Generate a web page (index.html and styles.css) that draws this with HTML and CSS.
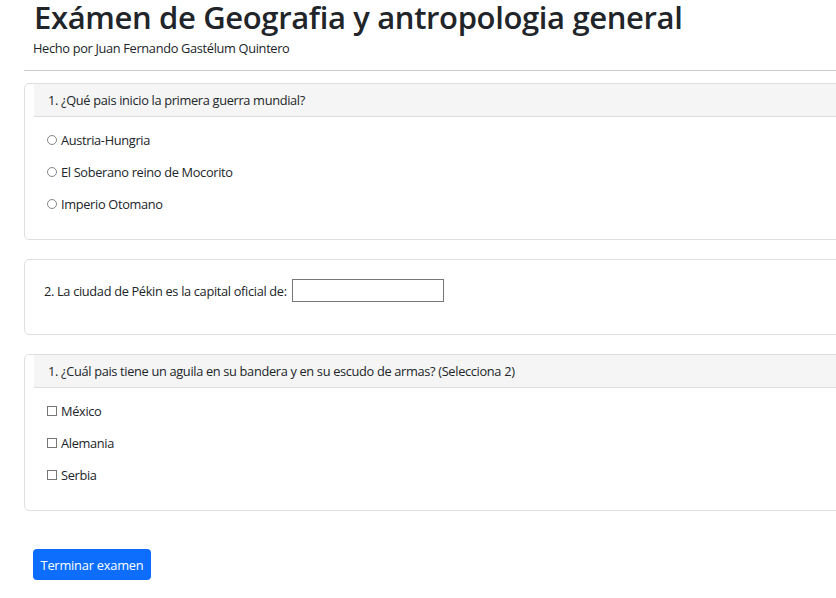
FILE: index.html
```html
<!DOCTYPE html>
<html lang="es">
<head>
<meta charset="utf-8">
<title>Exámen</title>
<link rel="stylesheet" href="styles.css">
</head>
<body>
<div class="page">
  <h1 class="title">Exámen de Geografia y antropologia general</h1>
  <p class="subtitle">Hecho por Juan Fernando Gastélum Quintero</p>
  <hr class="rule">

  <section class="card">
    <div class="card-header">1. ¿Qué pais inicio la primera guerra mundial?</div>
    <ul class="options">
      <li class="option"><span class="radio"></span><span>Austria-Hungria</span></li>
      <li class="option"><span class="radio"></span><span>El Soberano reino de Mocorito</span></li>
      <li class="option"><span class="radio"></span><span>Imperio Otomano</span></li>
    </ul>
  </section>

  <section class="card">
    <div class="fill-row">
      <span>2. La ciudad de Pékin es la capital oficial de:</span>
      <span class="text-input"></span>
    </div>
  </section>

  <section class="card">
    <div class="card-header">1. ¿Cuál pais tiene un aguila en su bandera y en su escudo de armas? (Selecciona 2)</div>
    <ul class="options">
      <li class="option"><span class="check"></span><span>México</span></li>
      <li class="option"><span class="check"></span><span>Alemania</span></li>
      <li class="option"><span class="check"></span><span>Serbia</span></li>
    </ul>
  </section>

  <button class="btn">Terminar examen</button>
</div>
</body>
</html>
```

FILE: styles.css
```css
html, body {
  margin: 0;
  padding: 0;
  overflow: hidden;
  background: #fff;
}
body {
  font-family: "Open Sans", "Noto Sans", sans-serif;
  font-size: 12.8px;
  letter-spacing: -0.33px;
  color: #212529;
}
.page {
  width: 1200px;
  padding-left: 24px;
}
.title {
  margin: 0 0 0 10px;
  padding-top: 1px;
  font-size: 31px;
  font-weight: 600;
  line-height: 32px;
  letter-spacing: -0.36px;
}
.subtitle {
  margin: 6px 0 0 9px;
  line-height: 19px;
}
.rule {
  margin: 12px 0 0 0;
  border: 0;
  border-top: 1px solid #cbcbcb;
  height: 0;
}
.card {
  margin-top: 12px;
  border: 1px solid #dfdfdf;
  border-radius: 5px;
}
.card + .card {
  margin-top: 19px;
}
.card-header {
  margin-left: 9px;
  height: 32px;
  padding-left: 14px;
  display: flex;
  align-items: center;
  background: #f5f5f5;
  border-bottom: 1px solid #dcdcdc;
}
.options {
  list-style: none;
  margin: 0;
  padding: 13px 0 26px 22px;
  display: flex;
  flex-direction: column;
  gap: 13px;
}
.option {
  display: flex;
  align-items: center;
  gap: 4px;
  height: 19px;
}
.radio {
  width: 8px;
  height: 8px;
  border: 1px solid #858585;
  border-radius: 50%;
}
.check {
  width: 8px;
  height: 8px;
  border: 1px solid #767676;
}
.fill-row {
  display: flex;
  align-items: center;
  gap: 5px;
  padding: 19px 19px 32px;
}
.text-input {
  width: 150px;
  height: 21px;
  border: 1px solid #767676;
}
.btn {
  margin: 38px 0 0 9px;
  width: 118px;
  height: 31px;
  border: 0;
  border-radius: 4px;
  background: #0d6efd;
  color: #fff;
  font-family: inherit;
  font-size: 12.8px;
  letter-spacing: -0.2px;
  padding: 0;
}
```
